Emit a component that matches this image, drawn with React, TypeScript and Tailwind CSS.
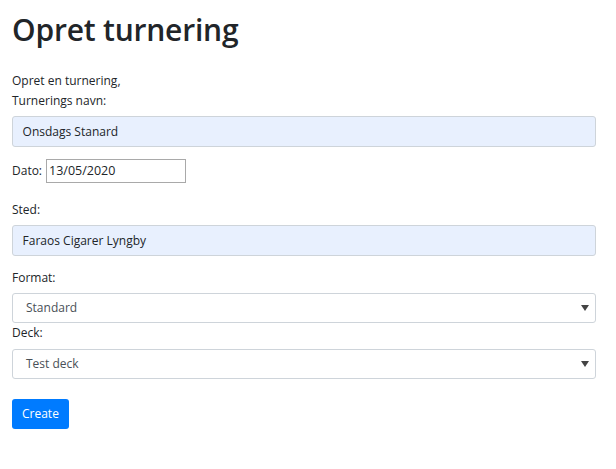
import React from 'react';

const font = { fontFamily: '"Open Sans", "Noto Sans", Arial, sans-serif' };

const Arrow = () => (
  <svg width="8" height="6" viewBox="0 0 8 6" className="absolute right-[6px] top-1/2 -translate-y-1/2">
    <path d="M0 0 H8 L4 6 Z" fill="#444" />
  </svg>
);

const SelectBox: React.FC<{ value: string }> = ({ value }) => (
  <div className="relative h-[30.4px] w-full rounded-[3px] border border-[#ced4da] bg-white flex items-center pl-[13px] text-[#495057]">
    <span>{value}</span>
    <Arrow />
  </div>
);

const App: React.FC = () => {
  return (
    <div className="min-h-[469px] bg-white text-[#212529] text-[12px] leading-[19.2px] pl-[12px] pt-[11px]" style={font}>
      <div className="w-[584px]">
        <h1 className="text-[30px] leading-[38.4px] font-semibold mb-[22px] tracking-[-0.2px]">Opret turnering</h1>

        <div>Opret en turnering,</div>
        <label className="block mb-[6.4px]">Turnerings navn:</label>
        <div className="h-[30.4px] rounded-[3px] border border-[#ced4da] bg-[#e8f0fe] flex items-center px-[9.6px] text-[#212529]">
          Onsdags Stanard
        </div>

        <div className="flex items-center mt-[12px] h-[24px]">
          <span className="mr-[4px]">Dato:</span>
          <div className="w-[140px] h-[24px] border border-[#a9a9a9] flex items-center px-[2px] text-[#212529] text-[12.5px]">
            13/05/2020
          </div>
        </div>

        <label className="block mt-[17px] mb-[6.4px]">Sted:</label>
        <div className="h-[30.4px] rounded-[3px] border border-[#ced4da] bg-[#e8f0fe] flex items-center px-[9.6px] text-[#212529]">
          Faraos Cigarer Lyngby
        </div>

        <label className="block mt-[12.8px] mb-[5px]">Format:</label>
        <SelectBox value="Standard" />
        <label className="block mb-[6.4px]">Deck:</label>
        <SelectBox value="Test deck" />

        <button className="mt-[19.6px] h-[30.4px] rounded-[3px] bg-[#007bff] text-white px-[10px]">
          Create
        </button>
      </div>
    </div>
  );
};

export default App;
